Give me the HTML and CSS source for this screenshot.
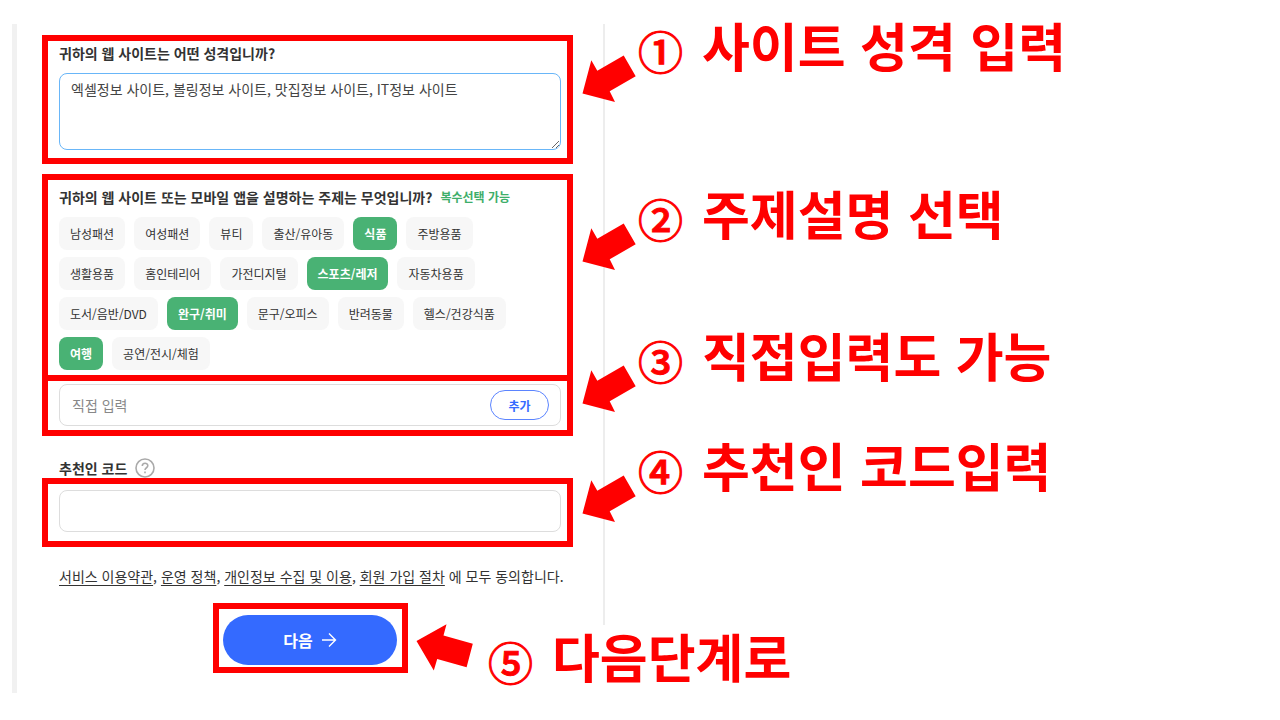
FILE: index.html
```html
<!DOCTYPE html>
<html lang="ko">
<head>
    <meta charset="UTF-8">
    <meta name="viewport" content="width=device-width, initial-scale=1.0">
    <title>회원 가입</title>
    <link rel="stylesheet" href="styles.css">
</head>
<body>
    <form class="panel">
        <section class="field">
            <label class="title" for="site">귀하의 웹 사이트는 어떤 성격입니까?</label>
            <textarea class="site-text" id="site">엑셀정보 사이트, 볼링정보 사이트, 맛집정보 사이트, IT정보 사이트</textarea>
        </section>

        <section class="field topics">
            <div class="title-row">
                <h2 class="title">귀하의 웹 사이트 또는 모바일 앱을 설명하는 주제는 무엇입니까?</h2>
                <span class="hint">복수선택 가능</span>
            </div>
            <div class="chips">
                <button type="button" class="chip">남성패션</button>
                <button type="button" class="chip">여성패션</button>
                <button type="button" class="chip">뷰티</button>
                <button type="button" class="chip">출산/유아동</button>
                <button type="button" class="chip selected">식품</button>
                <button type="button" class="chip">주방용품</button>
                <button type="button" class="chip">생활용품</button>
                <button type="button" class="chip">홈인테리어</button>
                <button type="button" class="chip">가전디지털</button>
                <button type="button" class="chip selected">스포츠/레저</button>
                <button type="button" class="chip">자동차용품</button>
                <button type="button" class="chip">도서/음반/DVD</button>
                <button type="button" class="chip selected">완구/취미</button>
                <button type="button" class="chip">문구/오피스</button>
                <button type="button" class="chip">반려동물</button>
                <button type="button" class="chip">헬스/건강식품</button>
                <button type="button" class="chip selected">여행</button>
                <button type="button" class="chip">공연/전시/체험</button>
            </div>
            <div class="input-box">
                <input type="text" class="custom-topic" placeholder="직접 입력" aria-label="직접 입력">
                <button type="button" class="add">추가</button>
            </div>
        </section>

        <section class="field code">
            <div class="title-row">
                <label class="title" for="code">추천인 코드</label>
                <svg class="help" viewBox="0 0 20 20">
                    <circle cx="10" cy="10" r="9"/>
                    <path d="M7.3 8 C7.3 4.4 12.8 4.4 12.8 7.8 C12.8 9.8 10 9.7 10 12"/>
                    <path d="M10 13.6 V15.2"/>
                </svg>
            </div>
            <input type="text" class="input-box code-input" id="code">
        </section>

        <p class="terms"><a href="#">서비스 이용약관</a>, <a href="#">운영 정책</a>, <a href="#">개인정보 수집 및 이용</a>, <a href="#">회원 가입 절차</a> 에 모두 동의합니다.</p>

        <button type="submit" class="next">다음
            <svg class="next-arrow" viewBox="0 0 16 16"><path d="M1 8 H14.5 M8 1.5 L14.5 8 L8 14.5"/></svg>
        </button>
    </form>

    <!-- Guide marks drawn over the form -->
    <div class="guide">
        <div class="mark mark-site"></div>
        <div class="mark mark-topics"></div>
        <div class="mark mark-custom"></div>
        <div class="mark mark-code"></div>
        <div class="mark mark-next"></div>

        <svg class="arrow arrow-1" viewBox="0 0 54 48"><path d="M.5 38.5 L9.3 5.3 L15.3 15.7 L41.7 .6 L53.7 21.3 L27.7 36.3 L33 47 Z"/></svg>
        <svg class="arrow arrow-2" viewBox="0 0 54 48"><path d="M.5 38.5 L9.3 5.3 L15.3 15.7 L41.7 .6 L53.7 21.3 L27.7 36.3 L33 47 Z"/></svg>
        <svg class="arrow arrow-3" viewBox="0 0 54 48"><path d="M.5 38.5 L9.3 5.3 L15.3 15.7 L41.7 .6 L53.7 21.3 L27.7 36.3 L33 47 Z"/></svg>
        <svg class="arrow arrow-4" viewBox="0 0 54 48"><path d="M.5 38.5 L9.3 5.3 L15.3 15.7 L41.7 .6 L53.7 21.3 L27.7 36.3 L33 47 Z"/></svg>
        <svg class="arrow arrow-5" viewBox="0 0 57 48"><path d="M.5 17 L30.5 .3 L27.5 11.5 L56.8 19.8 L50.6 43.2 L21.2 35 L17.8 46.6 Z"/></svg>

        <p class="note note-1"><span class="num">①</span>사이트 성격 입력</p>
        <p class="note note-2"><span class="num">②</span>주제설명 선택</p>
        <p class="note note-3"><span class="num">③</span>직접입력도 가능</p>
        <p class="note note-4"><span class="num">④</span>추천인 코드입력</p>
        <p class="note note-5"><span class="num">⑤</span>다음단계로</p>
    </div>
</body>
</html>
```
FILE: styles.css
```css
* {
    box-sizing: border-box;
}
body {
    margin: 0;
    padding: 24px 12px;
    background-color: #fff;
    color: #333;
    font-family: "Noto Sans CJK KR", sans-serif;
    font-size: 14px;
    line-height: 20px;
}
button, input, textarea {
    font-family: inherit;
}

/* form */
.panel {
    display: flex;
    flex-direction: column;
    max-width: 593px;
    padding: 19px 44px 28px 42px;
    border-left: 5px solid #f1f1f1;
    background: linear-gradient(#ededed, #ededed) no-repeat right top / 2px calc(100% - 68px);
}
.field {
    display: flex;
    flex-direction: column;
    gap: 10px;
}
.title {
    margin: 0;
    font-size: 14px;
    font-weight: 700;
}
.title-row {
    display: flex;
    align-items: center;
    gap: 8px;
}
.site-text {
    display: block;
    width: 100%;
    height: 77px;
    padding: 5px 11px;
    border: 1px solid #69b6f8;
    border-radius: 8px;
    outline: none;
    color: #444;
    font-size: 14px;
    line-height: 20px;
}
.topics {
    margin-top: 37px;
}
.hint {
    color: #3eae6a;
    font-size: 12px;
    font-weight: 700;
}
.chips {
    display: flex;
    flex-wrap: wrap;
    gap: 7px 9px;
    padding-right: 32px;
}
.chip {
    height: 33px;
    padding: 0 11px;
    border: none;
    border-radius: 8px;
    background-color: #f7f7f7;
    color: #333;
    font-size: 12px;
    cursor: pointer;
}
.chip.selected {
    background-color: #49b274;
    color: #fff;
    font-weight: 700;
}
.input-box {
    display: flex;
    align-items: center;
    height: 42px;
    border: 1px solid #ddd;
    border-radius: 8px;
}
.topics .input-box {
    margin-top: 4px;
    padding: 0 11px 0 12px;
}
.custom-topic {
    flex: 1;
    min-width: 0;
    padding: 0;
    border: none;
    outline: none;
    font-size: 14px;
}
.custom-topic::placeholder {
    color: #888;
}
.add {
    width: 59px;
    height: 30px;
    padding: 0;
    border: 1px solid #5b84ff;
    border-radius: 15px;
    background-color: #fff;
    color: #346aff;
    font-size: 12px;
    font-weight: 700;
    cursor: pointer;
}
.code {
    gap: 12px;
    margin-top: 32px;
}
.help {
    width: 20px;
    height: 20px;
    fill: none;
    stroke: #aaa;
    stroke-width: 1.6;
}
.code-input {
    width: 100%;
    padding: 0 12px;
}
.terms {
    margin: 34px 0 29px;
    white-space: nowrap;
}
.terms a {
    color: inherit;
    text-underline-offset: 3px;
}
.next {
    display: flex;
    align-items: center;
    justify-content: center;
    align-self: center;
    gap: 8px;
    width: 174px;
    height: 50px;
    border: none;
    border-radius: 25px;
    background-color: #346aff;
    color: #fff;
    font-size: 16px;
    font-weight: 700;
    cursor: pointer;
}
.next-arrow {
    width: 16px;
    height: 16px;
    fill: none;
    stroke: #fff;
    stroke-width: 1.4;
}

/* guide */
.mark, .arrow, .note {
    position: absolute;
}
.mark {
    left: 42px;
    width: 531px;
    border: 6px solid #f00;
    pointer-events: none;
}
.mark-site {
    top: 35px;
    height: 129px;
}
.mark-topics {
    top: 174px;
    height: 207px;
}
.mark-custom {
    top: 375px;
    height: 61px;
}
.mark-code {
    top: 478px;
    height: 69px;
}
.mark-next {
    top: 603px;
    left: 213px;
    width: 195px;
    height: 70px;
}
.arrow {
    left: 582px;
    width: 54px;
    height: 48px;
    fill: #f00;
}
.arrow-1 { top: 55px; }
.arrow-2 { top: 223px; }
.arrow-3 { top: 365px; }
.arrow-4 { top: 475px; }
.arrow-5 {
    top: 624px;
    left: 416px;
    width: 57px;
}
.note {
    display: flex;
    align-items: center;
    gap: 19px;
    left: 638px;
    margin: 0;
    color: #f00;
    font-size: 52px;
    font-weight: 700;
    line-height: 60px;
    white-space: nowrap;
}
.num {
    padding-top: 12px;
    font-size: 45px;
    font-weight: 500;
    -webkit-text-stroke: 1px #f00;
}
.note-1 { top: 9px; }
.note-2 { top: 177px; }
.note-3 { top: 319px; }
.note-4 { top: 429px; }
.note-5 {
    top: 620px;
    left: 488px;
}
```
